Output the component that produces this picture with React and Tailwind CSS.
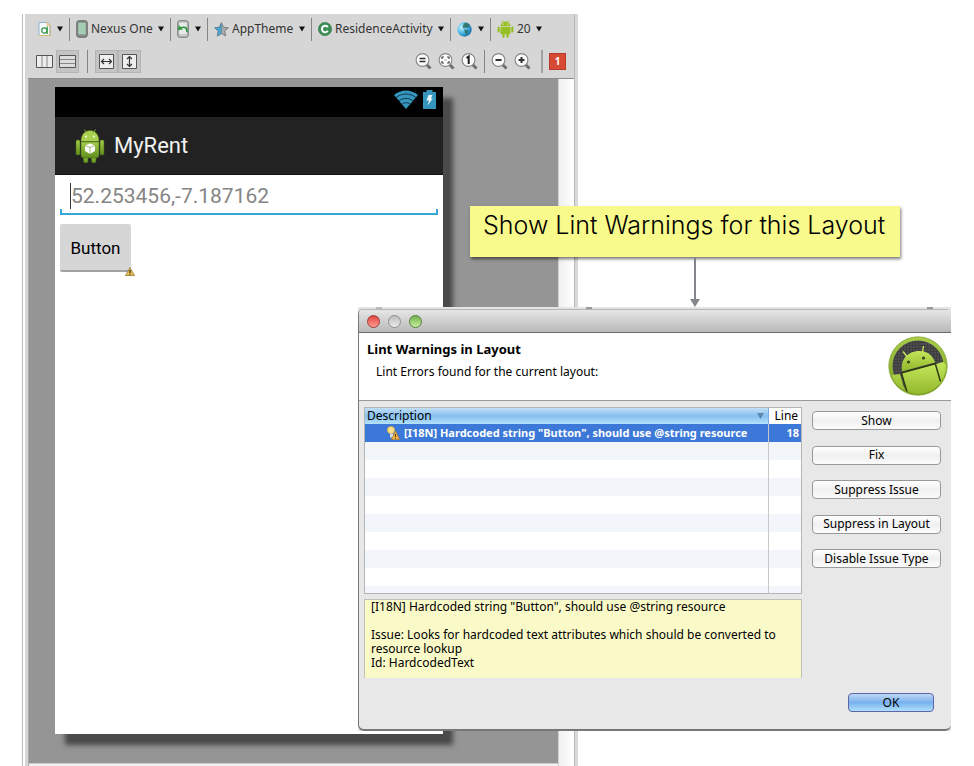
import React from "react";

const UI = "font-['Noto_Sans','Open_Sans',sans-serif]";

function Arrow() {
  return (
    <svg width="6" height="6" viewBox="0 0 6 6" className="shrink-0" aria-hidden="true">
      <path d="M0 .5h6L3 5.5z" fill="#111" />
    </svg>
  );
}

function ConfigIcon() {
  return (
    <svg width="13" height="16" viewBox="0 0 13 16" aria-hidden="true">
      <path d="M1 1.500h8l3 3v10H1z" fill="#f6faff" stroke="#8fb3cf" />
      <path d="M9 1.500l3 3v10H1" fill="none" stroke="#d8b66a" />
      <path d="M9 1.500v3h3z" fill="#f1dca6" stroke="#d8b66a" strokeWidth=".6" />
      <path d="M9.200 5.500v7.500" fill="none" stroke="#3b9a4c" strokeWidth="1.300" />
      <circle cx="6.300" cy="9.500" r="2.600" fill="none" stroke="#3b9a4c" strokeWidth="1.300" />
    </svg>
  );
}

function PhoneIcon() {
  return (
    <svg width="12" height="18" viewBox="0 0 12 18" aria-hidden="true">
      <rect x=".8" y=".8" width="10.400" height="16.400" rx="2" fill="#8b8f8c" stroke="#5d625f" />
      <rect x="2.300" y="2.800" width="7.400" height="11.400" fill="#a5cdb4" />
    </svg>
  );
}

function RotateIcon() {
  return (
    <svg width="12" height="18" viewBox="0 0 12 18" aria-hidden="true">
      <rect x=".8" y=".8" width="10.400" height="16.400" rx="2" fill="#c9ccca" stroke="#6a6f6c" />
      <rect x="2.500" y="3" width="7" height="11" fill="#e4ebe6" />
      <path d="M9.800 12c.8-4-2-6-6-4" fill="none" stroke="#2c9440" strokeWidth="1.600" />
      <path d="M.8 10l1-5 4 4.500z" fill="#2c9440" />
    </svg>
  );
}

function StarIcon() {
  return (
    <svg width="15" height="15" viewBox="0 0 15 15" aria-hidden="true">
      <path d="M7.500.8l2 4.500 4.800.5-3.600 3.300 1 4.900-4.200-2.500L3.300 14l1-4.900L.7 5.800l4.800-.5z" fill="#a9adb0" stroke="#73787c" strokeWidth=".9" />
      <path d="M7.500.8v10.700L3.300 14l1-4.900L.7 5.800l4.800-.5z" fill="#4aa5cf" stroke="#5a8296" strokeWidth=".7" />
    </svg>
  );
}

function ClassIcon() {
  return (
    <svg width="14" height="14" viewBox="0 0 14 14" aria-hidden="true">
      <circle cx="7" cy="7" r="6.600" fill="#3b8f56" stroke="#2d7545" strokeWidth=".6" />
      <path d="M9.800 5.200A3.200 3.200 0 1 0 9.800 8.800" fill="none" stroke="#fff" strokeWidth="2" />
    </svg>
  );
}

function GlobeIcon() {
  return (
    <svg width="15" height="15" viewBox="0 0 15 15" aria-hidden="true">
      <defs>
        <radialGradient id="globe" cx=".3" cy=".35" r=".8">
          <stop offset="0" stopColor="#c4f1ff" />
          <stop offset=".5" stopColor="#4cb6e6" />
          <stop offset="1" stopColor="#0f5f9c" />
        </radialGradient>
      </defs>
      <circle cx="7.500" cy="7.500" r="7.200" fill="url(#globe)" />
      <path d="M7 1.500l3-.7 2.500 1.700-.5 2.500-2 1-1.500-.5-1.500 1-1.500-1.500z" fill="#2b6d5c" opacity=".85" />
      <path d="M7 7.500l3 .3 1.500 1.700L9 13.500l-1-3z" fill="#2b6d5c" opacity=".8" />
    </svg>
  );
}

function AndroidIcon() {
  return (
    <svg width="17" height="18" viewBox="0 0 17 18" fill="#97c024" aria-hidden="true">
      <path d="M3.500 6a5 4.400 0 0 1 10 0zM3.500 6.800h10V13a1.200 1.200 0 0 1-1.200 1.200H4.700A1.200 1.200 0 0 1 3.500 13z" />
      <rect x=".5" y="6.600" width="2.200" height="6" rx="1.100" />
      <rect x="14.300" y="6.600" width="2.200" height="6" rx="1.100" />
      <rect x="5.300" y="13" width="2.300" height="4.800" rx="1.100" />
      <rect x="9.400" y="13" width="2.300" height="4.800" rx="1.100" />
      <path d="M5 .3l1.300 2.200M12 .3l-1.300 2.200" stroke="#97c024" strokeWidth=".8" />
      <circle cx="6.300" cy="4" r=".6" fill="#fff" />
      <circle cx="10.700" cy="4" r=".6" fill="#fff" />
    </svg>
  );
}

function Chooser({ label, value, icon }) {
  return (
    <label className="flex items-center">
      {icon}
      <select
        aria-label={label}
        className="ml-[3px] mr-[5px] h-5 appearance-none bg-transparent text-xs leading-5 text-[#333]"
        defaultValue={value}
      >
        <option>{value}</option>
      </select>
      <Arrow />
    </label>
  );
}

function MenuButton({ label, icon }) {
  return (
    <button type="button" aria-label={label} className="flex items-center gap-[6px]">
      {icon}
      <Arrow />
    </button>
  );
}

function Rule() {
  return <span className="h-[23px] w-px shrink-0 bg-[#858585]" />;
}

function Magnifier({ children, label }) {
  return (
    <button type="button" aria-label={label}>
      <svg width="17" height="17" viewBox="0 0 17 17" aria-hidden="true">
        <path d="M11 11l4.500 4.500" stroke="#6d6d6d" strokeWidth="2.800" />
        <circle cx="7.500" cy="7" r="6.400" fill="#fafafa" stroke="#858585" strokeWidth="1.100" />
        {children}
      </svg>
    </button>
  );
}

function ToggleButton({ label, pressed, children }) {
  return (
    <button
      type="button"
      aria-label={label}
      aria-pressed={pressed}
      className={
        pressed
          ? "flex h-[23px] w-[23px] items-center justify-center border border-[#b4b4b4] bg-[#c4c4c4]"
          : "flex h-[23px] w-[23px] items-center justify-center"
      }
    >
      <svg width="17" height="15" viewBox="0 0 17 15" fill="none" stroke="#555" aria-hidden="true">
        {children}
      </svg>
    </button>
  );
}

function Toolbar() {
  return (
    <div className="flex h-[65px] flex-col border-b border-[#8c8c8c] bg-[#d6d6d6]">
      <div className="flex h-[30px] items-center gap-[6px] pl-[10px]">
        <MenuButton label="Configuration" icon={<ConfigIcon />} />
        <Rule />
        <Chooser label="Device" value="Nexus One" icon={<PhoneIcon />} />
        <Rule />
        <MenuButton label="Orientation" icon={<RotateIcon />} />
        <Rule />
        <Chooser label="Theme" value="AppTheme" icon={<StarIcon />} />
        <Rule />
        <Chooser label="Activity" value="ResidenceActivity" icon={<ClassIcon />} />
        <Rule />
        <MenuButton label="Locale" icon={<GlobeIcon />} />
        <Rule />
        <Chooser label="API level" value="20" icon={<AndroidIcon />} />
      </div>
      <div className="flex h-[34px] items-center pl-[5px] pr-2">
        <ToggleButton label="Vertical layout">
          <path d="M.5 1.500h16v12H.5z" fill="#eee" />
          <path d="M6 2v11M11 2v11" stroke="#888" />
        </ToggleButton>
        <ToggleButton label="Horizontal layout" pressed>
          <path d="M.5 1.500h16v12H.5z" fill="#ddd" />
          <path d="M1 5.500h15M1 9.500h15" stroke="#888" />
        </ToggleButton>
        <span className="ml-2 mr-[7px] flex">
          <Rule />
        </span>
        <ToggleButton label="Toggle fill width" pressed>
          <path d="M1.500.5h14v14h-14z" fill="#eee" />
          <path d="M4 7.500h9M6 5L3.500 7.500 6 10M11 5l2.500 2.500L11 10" stroke="#333" strokeWidth="1.200" />
        </ToggleButton>
        <ToggleButton label="Toggle fill height" pressed>
          <path d="M1.500.5h14v14h-14z" fill="#eee" />
          <path d="M8.500 3v9M6 5l2.500-2.500L11 5M6 10l2.500 2.500L11 10" stroke="#333" strokeWidth="1.200" />
        </ToggleButton>
        <div className="ml-auto flex items-center gap-[6px]">
          <Magnifier label="Emulate real size">
            <path d="M4.500 5.500h6M4.500 8.500h6" stroke="#333" strokeWidth="1.700" />
          </Magnifier>
          <Magnifier label="Zoom to fit">
            <path d="M4 6V4h2M9 4h2v2M11 8v2H9M6 10H4V8" fill="none" stroke="#444" strokeWidth="1.200" />
            <path d="M6.500 7h2" stroke="#999" />
          </Magnifier>
          <Magnifier label="Actual size">
            <path d="M5.500 5l2.200-1.500V11" fill="none" stroke="#222" strokeWidth="2" />
          </Magnifier>
          <Rule />
          <Magnifier label="Zoom out">
            <path d="M4.500 7h6" stroke="#333" strokeWidth="2" />
          </Magnifier>
          <Magnifier label="Zoom in">
            <path d="M4.500 7h6M7.500 4v6" stroke="#333" strokeWidth="2" />
          </Magnifier>
          <span className="ml-1 h-[23px] w-[2px] bg-[#a0a0a0]" />
          <button type="button" aria-label="Show lint warnings" className="h-[17px] w-[17px] border border-[#b83a28] bg-[#d94a35] text-center text-[10px] font-bold leading-[15px] text-white">
            1
          </button>
        </div>
      </div>
    </div>
  );
}

function LauncherIcon() {
  return (
    <svg width="30" height="34" viewBox="0 0 30 34" aria-hidden="true">
      <defs>
        <linearGradient id="launcher" x1="0" x2="0" y1="0" y2="1">
          <stop offset="0" stopColor="#a4cc4a" />
          <stop offset="1" stopColor="#5f8c1c" />
        </linearGradient>
      </defs>
      <g fill="url(#launcher)" stroke="#47691a" strokeWidth=".5">
        <rect x="8.500" y="26" width="4.500" height="8" rx="2" />
        <rect x="16.500" y="26" width="4.500" height="8" rx="2" />
        <rect x="1" y="11" width="4" height="15" rx="1.500" />
        <rect x="25" y="11" width="4" height="15" rx="1.500" />
        <path d="M6 13h18v13a3 3 0 0 1-3 3H9a3 3 0 0 1-3-3z" />
        <path d="M6 12.500C6 5 10 1.500 15 1.500s9 3.500 9 11z" fill="#a9d14f" />
      </g>
      <path d="M9.500.5l2 3M20.500.5l-2 3" stroke="#7ba62c" />
      <circle cx="11" cy="7.500" r=".9" fill="#fff" />
      <circle cx="19" cy="7.500" r=".9" fill="#fff" />
      <path d="M15 14.500l5 2v5.500l-5 3-5-3v-5.500z" fill="#fff" />
      <path d="M10 16.500l5 2 5-2M15 18.500V25" fill="none" stroke="#8aa465" strokeWidth=".8" />
    </svg>
  );
}

function WarningIcon() {
  return (
    <svg width="10" height="9" viewBox="0 0 10 9" aria-hidden="true">
      <path d="M5 .6L9.500 8.500h-9z" fill="#f0c04a" stroke="#8f7a3c" strokeWidth=".8" />
      <path d="M5 3v3M5 6.800v1" stroke="#222" strokeWidth="1.200" />
    </svg>
  );
}

function Device() {
  return (
    <div className="flex flex-1 flex-col bg-white font-[Roboto,sans-serif] shadow-[10px_11px_5px_#4a4a4a]">
      <div className="flex h-[30px] items-start justify-end gap-[5px] bg-black pr-[7px] pt-[3px]">
        <svg width="24" height="20" viewBox="0 0 24 20" aria-hidden="true">
          <path d="M0 5c7-6 17-6 24 0L12 19z" fill="#3595bd" />
          <path d="M2 7.600c6-4.800 14-4.800 20 0M4.800 11c4.500-3.500 9.900-3.500 14.400 0M7.600 14.300c2.800-2.100 6-2.100 8.800 0" fill="none" stroke="#0b2f3d" strokeWidth=".9" />
        </svg>
        <svg width="13" height="20" viewBox="0 0 13 20" aria-hidden="true">
          <path d="M3.500 0h6v2H13v17H0V2h3.500z" fill="#3595bd" />
          <path d="M5.500 5h4L8 8.500h1.800L4.500 15.500 6 10.500H3.500z" fill="#e4f4fa" />
        </svg>
      </div>
      <div className="flex h-[58px] items-center gap-[9px] border-b border-[#111] bg-[#222] pl-5">
        <LauncherIcon />
        <h1 className="text-[22px] leading-7 text-[#f1f1f1]">MyRent</h1>
      </div>
      <div className="px-[5px] pt-[8px]">
        <div className="relative border-b-2 border-[#36a6d3] pb-[4px] pl-[10px]">
          <input
            aria-label="Geolocation"
            defaultValue="52.253456,-7.187162"
            className="block h-[26px] w-full border-l border-[#333] bg-transparent pt-[2px] text-[21px] text-[#858585] outline-none"
          />
          <span className="absolute bottom-0 left-0 h-[4px] w-[2px] bg-[#36a6d3]" />
          <span className="absolute bottom-0 right-0 h-[4px] w-[2px] bg-[#36a6d3]" />
        </div>
        <div className="relative mt-[9px] w-[71px]">
          <button type="button" className="h-[48px] w-full rounded-[2px] border-b-2 border-[#a2a2a2] bg-[#d6d6d6] pt-[3px] text-[17px] text-black">
            Button
          </button>
          <span className="absolute -bottom-1 -right-1">
            <WarningIcon />
          </span>
        </div>
      </div>
    </div>
  );
}

function Editor() {
  return (
    <section aria-label="Layout editor" className="mr-[396px] flex flex-1 border-l border-[#bdbdbd] pl-[2px]">
      <div className="w-[3px] bg-[#d6d6d6]" />
      <div className="flex min-w-0 flex-1 flex-col">
        <Toolbar />
        <div className="flex flex-1 border-l border-[#ababab]">
          <div className="flex flex-1 flex-col">
            <div className="flex flex-1 flex-col bg-[#959595] pb-[29px] pl-[26px] pr-[115px] pt-2">
              <Device />
            </div>
            <div className="h-[3px] border-t border-[#ccc] bg-[#f1f1f1]" />
          </div>
          <div className="w-4 border-l border-[#d0d0d0] bg-linear-to-r from-[#f0f0f0] to-white" />
        </div>
      </div>
      <div className="w-[4px] border-l border-[#b8b8b8] bg-[#d9d9d9]" />
    </section>
  );
}

function LintLogo() {
  return (
    <svg width="60" height="60" viewBox="0 0 60 60" aria-hidden="true">
      <defs>
        <linearGradient id="ring" x1="0" x2="0" y1="0" y2="1">
          <stop offset="0" stopColor="#a9cc4a" />
          <stop offset="1" stopColor="#7a9c1f" />
        </linearGradient>
        <linearGradient id="bot" x1="0" x2="0" y1="0" y2="1">
          <stop offset="0" stopColor="#c4e65a" />
          <stop offset="1" stopColor="#8fb52a" />
        </linearGradient>
        <pattern id="mesh" width="3" height="3" patternUnits="userSpaceOnUse">
          <rect width="3" height="3" fill="#4d4d4d" />
          <path d="M0 0h3M0 0v3" stroke="#333" />
        </pattern>
        <clipPath id="disc">
          <circle cx="30" cy="30" r="28" />
        </clipPath>
      </defs>
      <circle cx="30" cy="30" r="29.200" fill="url(#ring)" stroke="#86a83a" strokeWidth=".8" />
      <circle cx="30" cy="30" r="25.500" fill="url(#mesh)" />
      <g clipPath="url(#disc)">
        <path d="M4 39l8-1 6 20H6zM48 28l7-2 4 4-2 18-6 4z" fill="url(#bot)" />
        <path d="M14 37l34-9 7 26-14 6H20z" fill="url(#bot)" />
        <path d="M14 35.500C12 24 19 17 27 15.500s17 1 20 11z" fill="url(#bot)" />
        <path d="M19 20.500l-4-5M34.500 16l1-6" stroke="#cdee66" strokeWidth="1.300" />
        <path d="M13 37l35-9.500M13.500 37.500l6 20M47.500 28.500l5 17" fill="none" stroke="#303a16" strokeWidth="1.500" />
        <circle cx="20.500" cy="26" r="1.600" fill="#3a461a" />
        <circle cx="35.500" cy="22" r="1.600" fill="#3a461a" />
      </g>
    </svg>
  );
}

function BulbIcon() {
  return (
    <svg width="13" height="14" viewBox="0 0 13 14" aria-hidden="true">
      <circle cx="4" cy="4" r="3.600" fill="#fbe08a" stroke="#d9a73a" strokeWidth=".7" />
      <path d="M3 7.500h3v4H3z" fill="#d9d9d9" />
      <path d="M8.500 5l4 8.500h-8z" fill="#edb447" stroke="#b98020" strokeWidth=".7" />
      <path d="M8.500 8v3M8.500 11.800v1" stroke="#5a3a08" />
    </svg>
  );
}

const rows = [0, 1, 2, 3, 4, 5, 6, 7, 8];
const actions = ["Show", "Fix", "Suppress Issue", "Suppress in Layout", "Disable Issue Type"];

function LintTable() {
  return (
    <div className="h-[187px] overflow-hidden border border-[#b5b5b5] bg-white">
      <table className="w-full table-fixed border-collapse text-xs leading-4">
        <colgroup>
          <col />
          <col className="w-[33px]" />
        </colgroup>
        <thead>
          <tr className="h-4 text-left">
            <th scope="col" className="border-r border-[#7fa8dc] bg-linear-to-b from-[#c2dff6] via-[#85bff0] to-[#b4e2fb] p-0 pl-[2px] font-normal">
              <span className="flex items-center justify-between pr-1">
                Description
                <svg width="7" height="6" viewBox="0 0 7 6" aria-hidden="true">
                  <path d="M0 0h7L3.500 6z" fill="#5d86ab" />
                </svg>
              </span>
            </th>
            <th scope="col" className="p-0 pl-[6px] font-normal">Line</th>
          </tr>
        </thead>
        <tbody>
          <tr className="h-[18px] bg-[#3c78d8] text-[11px] font-bold text-white">
            <td className="border-r border-[#c8c8c8] p-0 pl-[22px]">
              <span className="flex items-center gap-1 whitespace-nowrap">
                <BulbIcon />
                [I18N] Hardcoded string "Button", should use @string resource
              </span>
            </td>
            <td className="p-0 pr-[2px] text-right">18</td>
          </tr>
          {rows.map((row) => (
            <tr key={row} className="h-[18px] odd:bg-white even:bg-[#f2f6fb]">
              <td className="border-r border-[#c8c8c8] p-0" />
              <td className="p-0" />
            </tr>
          ))}
        </tbody>
      </table>
    </div>
  );
}

function Dialog() {
  return (
    <section aria-labelledby="lint-title" className="absolute left-[358px] top-[307px] w-[593px] bg-[#e4e4e4] text-black">
      <div className="flex h-[2px] px-[18px]">
        <span className="w-[6px] bg-[#bbb]" />
        <span className="ml-[204px] mr-auto w-[6px] bg-[#999]" />
        <span className="w-[6px] bg-[#999]" />
      </div>
      <div className="overflow-hidden rounded-[5px] rounded-b-md border-b-2 border-l border-[#777] bg-[#e8e8e8]">
        <div className="flex h-6 items-center gap-2 border-b border-t border-b-[#6a6a6a] border-t-[#b5b5b5] bg-linear-to-b from-[#e6e6e6] to-[#b9b9b9] pl-2">
          <button type="button" aria-label="Close" className="h-[13px] w-[13px] rounded-full border border-[#9c3a37] bg-linear-to-b from-[#e0403e] to-[#ff9a94]" />
          <button type="button" aria-label="Minimize" className="h-[13px] w-[13px] rounded-full border border-[#8f8f8f] bg-linear-to-b from-[#bcbcbc] to-[#ededed]" />
          <button type="button" aria-label="Zoom" className="h-[13px] w-[13px] rounded-full border border-[#55803c] bg-linear-to-b from-[#74b14c] to-[#c8f0a0]" />
        </div>
        <header className="flex h-[68px] justify-between border-b border-[#999] bg-white pl-2 pr-[3px] pt-[3px]">
          <div>
            <h2 id="lint-title" className="mt-[5px] text-[13px] font-bold leading-4">Lint Warnings in Layout</h2>
            <p className="mt-[7px] pl-[9px] text-xs leading-4">Lint Errors found for the current layout:</p>
          </div>
          <LintLogo />
        </header>
        <div className="flex gap-[10px] pl-[5px] pr-[10px] pt-[6px]">
          <div className="min-w-0 flex-1">
            <LintTable />
            <textarea
              aria-label="Issue details"
              readOnly
              className="mt-[5px] block h-[79px] w-full resize-none overflow-hidden border border-b-0 border-[#c0c0b8] bg-[#fafac8] px-[6px] text-xs leading-[14px] outline-none"
              defaultValue={
                '[I18N] Hardcoded string "Button", should use @string resource\n\nIssue: Looks for hardcoded text attributes which should be converted to resource lookup\nId: HardcodedText'
              }
            />
          </div>
          <div className="mt-1 flex h-[157px] w-[129px] flex-col justify-between">
            {actions.map((name) => (
              <button
                key={name}
                type="button"
                className="h-[19px] rounded-[4px] border border-[#999] bg-linear-to-b from-white via-[#f0f0f0] to-[#fbfbfb] text-xs leading-4"
              >
                {name}
              </button>
            ))}
          </div>
        </div>
        <div className="flex justify-end pb-[17px] pr-[17px] pt-[15px]">
          <button
            type="button"
            className="h-[19px] w-[86px] rounded-[4px] border border-[#5a66a8] bg-linear-to-b from-[#bfd8f5] via-[#78b1ee] to-[#b0e0fd] text-xs leading-4"
          >
            OK
          </button>
        </div>
      </div>
    </section>
  );
}

function Callout() {
  return (
    <aside className="absolute left-[470px] top-[206px] flex w-[430px] flex-col items-center">
      <p className="h-[51px] w-full whitespace-nowrap bg-[#f8fa8c] pl-[13px] pt-[3px] font-[Inter,sans-serif] text-[25px] font-light leading-8 text-black shadow-[1px_2px_3px_#0008]">
        Show Lint Warnings for this Layout
      </p>
      <svg width="10" height="50" viewBox="0 0 10 50" className="translate-x-[10px]" aria-hidden="true">
        <path d="M5 0v43" stroke="#83868b" strokeWidth="2" />
        <path d="M0 42h10L5 50z" fill="#83868b" />
      </svg>
    </aside>
  );
}

export default function App() {
  return (
    <main className={`relative flex min-h-screen bg-white pl-[22px] pt-[14px] ${UI}`}>
      <Editor />
      <Dialog />
      <Callout />
    </main>
  );
}
